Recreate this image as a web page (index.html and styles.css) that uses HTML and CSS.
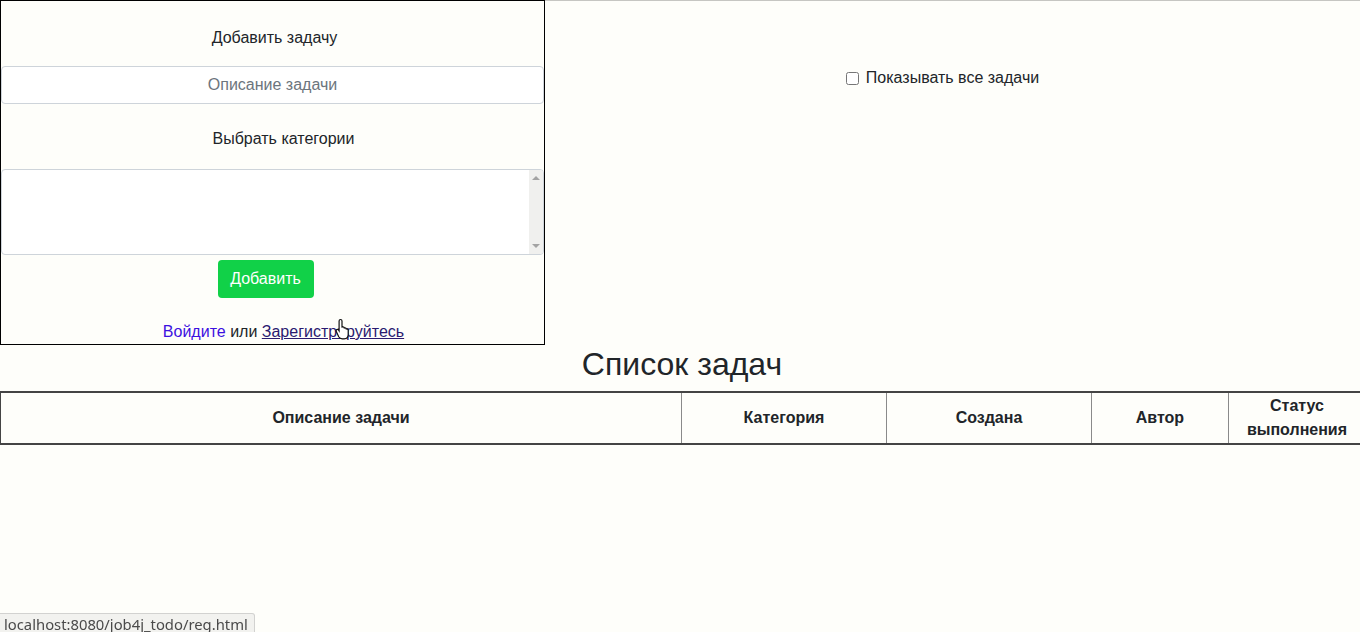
FILE: index.html
```html
<!DOCTYPE html>
<html lang="ru">
<head>
<meta charset="utf-8">
<title>TODO</title>
<link rel="stylesheet" href="styles.css">
</head>
<body>
<div class="top-row">
  <div class="form-box">
    <div class="form-label first">Добавить задачу</div>
    <input class="text-input" type="text" placeholder="Описание задачи">
    <div class="form-label second">Выбрать категории</div>
    <div class="multi-select">
      <div class="select-area"></div>
      <div class="scrollbar">
        <span class="arrow up"></span>
        <span class="arrow down"></span>
      </div>
    </div>
    <div class="btn-row"><button class="btn-add" type="button">Добавить</button></div>
    <div class="auth-line"><a class="link-login" href="#">Войдите</a> или <a class="link-reg" href="#">Зарегистрируйтесь</a></div>
  </div>
  <div class="right-col">
    <label class="show-all"><input type="checkbox" class="check"> Показывать все задачи</label>
  </div>
</div>
<h2 class="list-title">Список задач</h2>
<div class="table-wrap">
  <table class="tasks">
    <thead>
      <tr>
        <th class="c-desc">Описание задачи</th>
        <th class="c-cat">Категория</th>
        <th class="c-created">Создана</th>
        <th class="c-author">Автор</th>
        <th class="c-status">Статус выполнения</th>
      </tr>
    </thead>
  </table>
</div>
<svg class="cursor" width="17" height="22" viewBox="0 0 17 22">
  <path d="M5.5 1.5c.9 0 1.5.6 1.5 1.5v6l.8-.1c.8-.1 1.4.4 1.5 1.1l.5-.1c.8-.1 1.4.4 1.5 1.1l.4-.1c.8-.1 1.5.5 1.5 1.3v4.3c0 2.4-1.6 4.3-4 4.3H7.2c-1.6 0-2.7-.8-3.5-2.1L1.3 13.6c-.4-.7-.2-1.6.5-2 .6-.3 1.3-.1 1.7.4l.6.9V3c0-.9.6-1.5 1.4-1.5z" fill="#fff" stroke="#111" stroke-width="1.2"/>
</svg>
<div class="status-bubble">localhost:8080/job4j_todo/reg.html</div>
</body>
</html>
```

FILE: styles.css
```css
html, body {
  margin: 0;
  padding: 0;
}
body {
  background: #fefefa;
  color: #212529;
  font-family: "Liberation Sans", Arial, sans-serif;
  font-size: 16px;
  line-height: 24px;
  height: 632px;
  overflow: hidden;
}
.top-row {
  display: flex;
  align-items: flex-start;
}
.form-box {
  box-sizing: border-box;
  width: 545px;
  height: 345px;
  border: 1px solid #000;
  display: flex;
  flex-direction: column;
}
.form-label {
  text-align: center;
}
.form-label.first {
  margin-top: 25px;
  padding-left: 4px;
}
.form-label.second {
  margin-top: 23px;
  padding-left: 22px;
}
.text-input {
  box-sizing: border-box;
  margin: 16px 0 0 0;
  width: 543px;
  height: 38px;
  border: 1px solid #ced4da;
  border-radius: 4px;
  background: #fff;
  font-family: "Liberation Sans", Arial, sans-serif;
  font-size: 16px;
  text-align: center;
  color: #495057;
  padding: 6px 12px;
}
.text-input::placeholder {
  color: #6c757d;
}
.multi-select {
  box-sizing: border-box;
  margin-top: 18px;
  width: 543px;
  height: 86px;
  border: 1px solid #ced4da;
  border-radius: 4px;
  background: #fff;
  display: flex;
  overflow: hidden;
}
.select-area {
  flex: 1;
}
.scrollbar {
  width: 14px;
  background: #f0f0ee;
  position: relative;
}
.arrow {
  position: absolute;
  left: 3px;
  width: 0;
  height: 0;
  border-left: 4px solid transparent;
  border-right: 4px solid transparent;
}
.arrow.up {
  top: 6px;
  border-bottom: 4px solid #a3a3a3;
}
.arrow.down {
  bottom: 6px;
  border-top: 4px solid #a3a3a3;
}
.btn-row {
  margin-top: 5px;
  display: flex;
  justify-content: center;
  margin-left: -14px;
}
.btn-add {
  width: 96px;
  height: 38px;
  border: none;
  border-radius: 4px;
  background: #11d148;
  color: #fff;
  font-family: "Liberation Sans", Arial, sans-serif;
  font-size: 16px;
  padding: 0;
}
.auth-line {
  margin-top: 22px;
  text-align: center;
  padding-left: 22px;
}
.link-login {
  color: #3c10e0;
  text-decoration: none;
}
.link-reg {
  color: #2a1a70;
  text-decoration: underline;
}
.right-col {
  flex: 1;
  height: 345px;
  border-top: 1px solid #c6c6c2;
  display: flex;
  justify-content: center;
  padding-right: 20px;
  padding-top: 65px;
  box-sizing: border-box;
}
.show-all {
  display: flex;
  align-items: center;
  height: 24px;
  gap: 5px;
}
.check {
  margin: 0 2px 0 0;
  width: 13px;
  height: 13px;
}
.list-title {
  margin: 0 0 8px 0;
  text-align: center;
  font-size: 32px;
  font-weight: 400;
  line-height: 38px;
  color: #212529;
  padding-left: 4px;
}
.table-wrap {
  overflow: hidden;
  width: 1360px;
}
.tasks {
  border-collapse: collapse;
  table-layout: fixed;
  width: 1366px;
  border-top: 2px solid #444;
  border-bottom: 2px solid #444;
  border-left: 1px solid #444;
}
.tasks th {
  border: 1px solid #8a8a8a;
  border-top: 2px solid #444;
  border-bottom: 2px solid #444;
  padding: 0;
  height: 50px;
  text-align: center;
  vertical-align: middle;
  font-weight: 700;
  line-height: 24px;
}
.tasks th:first-child {
  border-left: 1px solid #444;
}
.c-desc { width: 50%; }
.c-cat { width: 15%; }
.c-created { width: 15%; }
.c-author { width: 10%; }
.c-status { width: 10%; }
.cursor {
  position: absolute;
  left: 335px;
  top: 318px;
}
.status-bubble {
  position: fixed;
  left: 0;
  bottom: -1px;
  height: 18px;
  padding: 0 6px 0 4px;
  background: #f2f2ef;
  border: 1px solid #d2d2d0;
  border-left: none;
  border-top-right-radius: 3px;
  font-family: "Noto Sans", "DejaVu Sans", sans-serif;
  font-size: 14.8px;
  line-height: 21px;
  color: #4a4a4a;
  overflow: hidden;
}
```
